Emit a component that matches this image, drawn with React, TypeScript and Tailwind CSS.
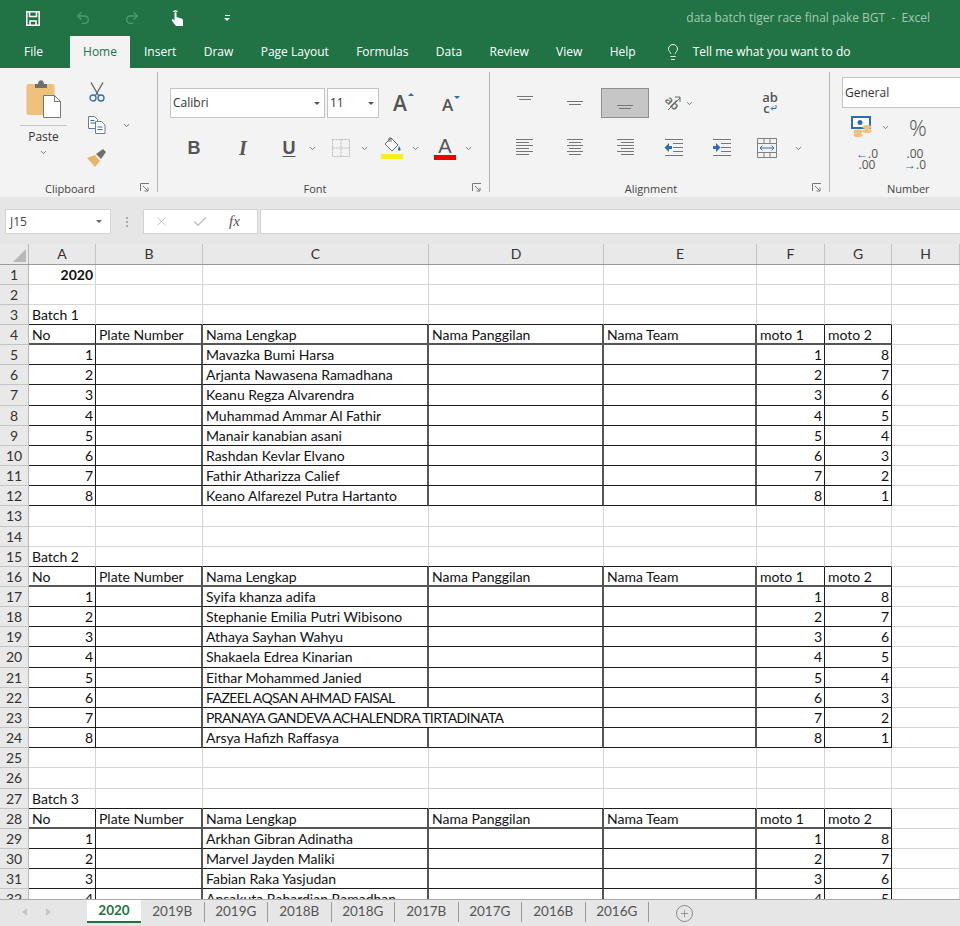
import { Undo2, Redo2, Lightbulb, ChevronDown, Check, X, Plus } from 'lucide-react';

type Row = { cells: string[]; boxed?: boolean; head?: boolean; wide?: boolean; caps?: boolean };

const COLUMNS = ['A', 'B', 'C', 'D', 'E', 'F', 'G', 'H'];
const COL_WIDTHS = ['w-[67px]', 'w-[107px]', 'w-[226px]', 'w-[175px]', 'w-[153px]', 'w-[68px]', 'w-[67px]', 'w-[68px]'];
// the printed borders of these columns came out heavier in the capture
const BOX_RIGHT = [
  'border-r border-r-[#1c1c1c]',
  'border-r-2 border-r-[#555]',
  'border-r-2 border-r-[#555]',
  'border-r-2 border-r-[#555]',
  'border-r-2 border-r-[#555]',
  'border-r border-r-[#1c1c1c]',
  'border-r border-r-[#1c1c1c]',
];

const HEAD = ['No', 'Plate Number', 'Nama Lengkap', 'Nama Panggilan', 'Nama Team', 'moto 1', 'moto 2'];

const BATCH_1 = [
  'Mavazka Bumi Harsa',
  'Arjanta Nawasena Ramadhana',
  'Keanu Regza Alvarendra',
  'Muhammad Ammar Al Fathir',
  'Manair kanabian asani',
  'Rashdan Kevlar Elvano',
  'Fathir Atharizza Calief',
  'Keano Alfarezel Putra Hartanto',
];
const BATCH_2 = [
  'Syifa khanza adifa',
  'Stephanie Emilia Putri Wibisono',
  'Athaya Sayhan Wahyu',
  'Shakaela Edrea Kinarian',
  'Eithar Mohammed Janied',
  'FAZEEL AQSAN AHMAD FAISAL',
  'PRANAYA GANDEVA ACHALENDRA TIRTADINATA',
  'Arsya Hafizh Raffasya',
];
const BATCH_3 = ['Arkhan Gibran Adinatha', 'Marvel Jayden Maliki', 'Fabian Raka Yasjudan', 'Ansakuta Rahardian Ramadhan'];

function batchRows(names: string[], title: string): Row[] {
  return [
    { cells: [title] },
    { cells: HEAD, boxed: true, head: true },
    ...names.map((name, i) => ({
      cells: [String(i + 1), '', name, '', '', String(i + 1), String(8 - i)],
      boxed: true,
      wide: name.startsWith('PRANAYA'),
      caps: name === name.toUpperCase(),
    })),
  ];
}

const ROWS: Row[] = [
  { cells: ['2020'] },
  { cells: [] },
  ...batchRows(BATCH_1, 'Batch 1'),
  { cells: [] },
  { cells: [] },
  ...batchRows(BATCH_2, 'Batch 2'),
  { cells: [] },
  { cells: [] },
  ...batchRows(BATCH_3, 'Batch 3'),
];

const TABS = ['2019B', '2019G', '2018B', '2018G', '2017B', '2017G', '2016B', '2016G'];

function Chev({ className = '' }: { className?: string }) {
  return <ChevronDown size={9} strokeWidth={2} className={`text-[#555] ${className}`} />;
}

function Launcher() {
  return (
    <svg width="10" height="10" viewBox="0 0 10 10" fill="none" stroke="#777">
      <path d="M.5 8V.5H9M3 3l5 5M8 4.5V8H4.5" />
    </svg>
  );
}

function Lines({ rows }: { rows: [number, number, number][] }) {
  return (
    <svg width="20" height="22" viewBox="0 0 20 22" stroke="#767676" strokeWidth="1">
      {rows.map(([y, a, b]) => (
        <path key={y} d={`M${a} ${y + 0.5}H${b}`} />
      ))}
    </svg>
  );
}

const VERT = (y: number): [number, number, number][] => [
  [y, 2, 18],
  [y + 3, 4, 16],
];
const LEFT: [number, number, number][] = [[2, 1, 18], [5, 1, 14], [8, 1, 18], [11, 1, 14], [14, 1, 18], [17, 1, 14]];
const CENTER: [number, number, number][] = [[2, 2, 18], [5, 4, 16], [8, 2, 18], [11, 4, 16], [14, 2, 18], [17, 4, 16]];
const RIGHT: [number, number, number][] = [[2, 2, 19], [5, 6, 19], [8, 2, 19], [11, 6, 19], [14, 2, 19], [17, 6, 19]];

function Indent({ flip }: { flip?: boolean }) {
  return (
    <svg width="20" height="20" viewBox="0 0 20 20">
      <g stroke="#767676">
        <path d="M1 1.5h18M9 5.5h10M9 9.5h10M9 13.5h10M1 17.5h18" />
      </g>
      {flip ? (
        <path d="M1 8h3V5l4.5 4.5L4 14v-3H1z" fill="#2f6db3" />
      ) : (
        <path d="M8 8H5V5L.5 9.5 5 14v-3h3z" fill="#2f6db3" />
      )}
    </svg>
  );
}

function PasteIcon() {
  return (
    <svg width="36" height="40" viewBox="0 0 36 40">
      <rect x="0.5" y="4" width="28" height="31" rx="2" fill="#eec27d" />
      <path d="M9 4h3c0-5 6-5 6 0h3v4H9z" fill="#6f6f6f" />
      <path d="M17.5 15.5h11l6 6v16h-17z" fill="#fff" stroke="#777" />
      <path d="M28.5 15.5v6h6" fill="none" stroke="#777" />
    </svg>
  );
}

function ScissorsIcon() {
  return (
    <svg width="18" height="20" viewBox="0 0 18 20" fill="none">
      <path d="M3 .5l7.500 13M15 .5L7.500 13.500" stroke="#666" strokeWidth="1.400" />
      <circle cx="5" cy="16" r="3" stroke="#2f6db3" strokeWidth="1.300" />
      <circle cx="13" cy="16" r="3" stroke="#2f6db3" strokeWidth="1.300" />
    </svg>
  );
}

function CopyIcon() {
  return (
    <svg width="20" height="20" viewBox="0 0 20 20" fill="#fff" stroke="#6f7c8a">
      <path d="M1.5 1.5h6l3 3v9h-9z" />
      <path d="M8.5 6.5h6l3.5 3.5v8.500h-9.500z" />
      <path d="M3.500 5.500h4M3.500 8h5M10.500 12h5M10.500 14.500h5" stroke="#2f6db3" />
    </svg>
  );
}

function BrushIcon() {
  return (
    <svg width="22" height="20" viewBox="0 0 22 20">
      <path d="M1 10l8-3 5 6-5 6z" fill="#e8b56d" />
      <path d="M10 6l7-5 3 3-5 7z" fill="#6f6f6f" />
    </svg>
  );
}

function BorderIcon() {
  return (
    <svg width="18" height="18" viewBox="0 0 18 18" fill="none" stroke="#b8b8b8" strokeDasharray="2 1">
      <path d="M.5.500h17v17H.500zM9 .500v17M.500 9h17" />
    </svg>
  );
}

function FillIcon() {
  return (
    <div className="flex flex-col items-center">
      <svg width="20" height="17" viewBox="0 0 20 17" fill="none" stroke="#666">
        <path d="M9 1l7 7-6 6-7-7z" fill="#fff" />
        <path d="M7 5V1.500c0-1 2-1 2 0V5" />
        <path d="M17 9c1 2 2 3 1.500 4s-2.500 1-2.500-.500c0-1 .500-2 1-3.500z" fill="#2f6db3" stroke="none" />
      </svg>
      <div className="h-[5px] w-[22px] bg-[#ffee1f]" />
    </div>
  );
}

function MoneyIcon() {
  return (
    <svg width="22" height="22" viewBox="0 0 22 22">
      <rect x="1" y="1" width="18" height="11" fill="#fff" stroke="#2f6db3" strokeWidth="2" />
      <circle cx="9" cy="6.500" r="2.500" fill="#2f6db3" />
      <ellipse cx="16" cy="11" rx="4.500" ry="2" fill="#eec27d" />
      <ellipse cx="16" cy="15" rx="4.500" ry="2" fill="#eec27d" />
      <ellipse cx="7" cy="19" rx="4.500" ry="2" fill="#eec27d" />
      <ellipse cx="7" cy="15.500" rx="4.500" ry="2" fill="#eec27d" />
    </svg>
  );
}

function MergeIcon() {
  return (
    <svg width="20" height="20" viewBox="0 0 20 20" fill="none" stroke="#808080">
      <path d="M.5.500h19v19H.500zM.500 5.500h19M.500 14.500h19M7 .500v5M13 .500v5M7 14.500v5M13 14.500v5" />
      <path d="M3 10h14M5.500 7.500L3 10l2.500 2.500M14.500 7.500L17 10l-2.500 2.500" stroke="#2f6db3" />
    </svg>
  );
}

function GroupLabel({ label, className }: { label: string; className: string }) {
  return (
    <div className={`mt-auto -mb-[5px] flex h-[18px] items-center text-[11px] leading-none text-[#444] ${className}`}>
      <span className="flex-1 text-center">{label}</span>
      <Launcher />
    </div>
  );
}

function Ribbon() {
  return (
    <div className="flex h-[129px] shrink-0 bg-[#f3f3f3] pt-[4px] pb-[5px] font-['Open_Sans',sans-serif] text-[#333]">
      {/* clipboard */}
      <div className="flex w-[158px] shrink-0 flex-col border-r border-r-[#b5b5b5]">
        <div className="flex">
          <div className="ml-[20px] flex w-[47px] flex-col items-center pt-[8px]">
            <PasteIcon />
            <div className="mt-[5px] h-px w-full bg-[#c6c6c6]" />
            <span className="mt-[2px] text-[12px] leading-[18px]">Paste</span>
            <Chev className="mt-[2px]" />
          </div>
          <div className="ml-[19px] flex w-[22px] flex-col items-center gap-[13px] pt-[10px]">
            <ScissorsIcon />
            <CopyIcon />
            <BrushIcon />
          </div>
          <Chev className="mt-[49px] ml-[14px]" />
        </div>
        <GroupLabel label="Clipboard" className="pr-[7px]" />
      </div>

      {/* font */}
      <div className="flex w-[332px] shrink-0 flex-col border-r border-r-[#b5b5b5]">
        <div className="mt-[16px] flex items-center pl-[12px]">
          <div className="flex h-[30px] w-[155px] items-center justify-between border border-[#c4c4c4] bg-white pr-[4px] pl-[2px] text-[12px]">
            Calibri
            <span className="mt-px border-x-[3px] border-t-[3px] border-x-transparent border-t-[#555]" />
          </div>
          <div className="ml-[2px] flex h-[30px] w-[52px] items-center justify-between border border-[#c4c4c4] bg-white pr-[4px] pl-[2px] text-[12px]">
            11
            <span className="mt-px border-x-[3px] border-t-[3px] border-x-transparent border-t-[#555]" />
          </div>
          <span className="ml-[14px] flex w-[20px] text-[21px] leading-none font-semibold text-[#555]">
            A<span className="ml-[1px] h-0 border-x-[3px] border-b-[3px] border-x-transparent border-b-[#2f6db3]" />
          </span>
          <span className="ml-[29px] flex w-[20px] pt-[2px] text-[17px] leading-none font-semibold text-[#555]">
            A<span className="ml-[1px] h-0 border-x-[3px] border-t-[3px] border-x-transparent border-t-[#2f6db3]" />
          </span>
        </div>
        <div className="mt-[15px] flex h-[30px] items-center pl-[12px]">
          <span className="w-[48px] text-center font-['Liberation_Sans',sans-serif] text-[18px] font-bold text-[#555]">B</span>
          <span className="w-[50px] text-center font-['Liberation_Serif',serif] text-[20px] font-bold text-[#555] italic">I</span>
          <span className="ml-[4px] w-[34px] text-center font-['Liberation_Sans',sans-serif] text-[18px] leading-[20px] font-bold text-[#555] underline underline-offset-2">U</span>
          <span className="flex w-[12px] justify-center"><Chev /></span>
          <span className="ml-[6px] flex w-[34px] justify-center"><BorderIcon /></span>
          <span className="flex w-[12px] justify-center"><Chev /></span>
          <span className="ml-[5px] flex w-[34px] justify-center"><FillIcon /></span>
          <span className="flex w-[12px] justify-center"><Chev /></span>
          <span className="ml-[7px] flex w-[34px] flex-col items-center">
            <span className="font-['Liberation_Sans',sans-serif] text-[20px] leading-[18px] text-[#555]">A</span>
            <span className="h-[5px] w-[22px] bg-[#ee0000]" />
          </span>
          <span className="flex w-[12px] justify-center"><Chev /></span>
        </div>
        <GroupLabel label="Font" className="pr-[7px]" />
      </div>

      {/* alignment */}
      <div className="flex w-[340px] shrink-0 flex-col border-r border-r-[#b5b5b5]">
        <div className="mt-[16px] flex h-[30px] items-center">
          <span className="ml-[10px] flex w-[50px] justify-center"><Lines rows={VERT(4)} /></span>
          <span className="flex w-[50px] justify-center"><Lines rows={VERT(9)} /></span>
          <span className="ml-[1px] flex h-[30px] w-[48px] justify-center border border-[#8f8f8f] bg-[#c6c6c6] pt-[4px]"><Lines rows={VERT(12)} /></span>
          <span className="relative ml-[12px] flex h-[20px] w-[22px] items-center justify-center overflow-visible">
            <span className="rotate-[45deg] text-[12px] leading-none font-semibold text-[#666]">ab</span>
            <svg className="absolute top-0 left-0" width="22" height="20" viewBox="0 0 22 20" fill="none" stroke="#666">
              <path d="M7 17L19 5M14 4h5v5" />
            </svg>
          </span>
          <Chev className="ml-[2px]" />
          <span className="ml-[65px] flex w-[22px] flex-col items-center text-[13px] leading-[11px] font-semibold text-[#555]">
            <span>ab</span>
            <span className="flex items-center">
              c
              <svg width="7" height="7" viewBox="0 0 7 7" fill="none" stroke="#2f6db3">
                <path d="M6 0v3.500H1.500M3 1.500l-2 2 2 2" />
              </svg>
            </span>
          </span>
        </div>
        <div className="mt-[15px] flex h-[30px] items-center">
          <span className="ml-[10px] flex w-[50px] justify-center"><Lines rows={LEFT} /></span>
          <span className="flex w-[50px] justify-center"><Lines rows={CENTER} /></span>
          <span className="flex w-[50px] justify-center"><Lines rows={RIGHT} /></span>
          <span className="flex w-[47px] justify-center"><Indent /></span>
          <span className="flex w-[50px] justify-center"><Indent flip /></span>
          <span className="flex w-[40px] justify-center"><MergeIcon /></span>
          <Chev className="ml-[7px]" />
        </div>
        <GroupLabel label="Alignment" className="pr-[7px]" />
      </div>

      {/* number */}
      <div className="flex min-w-0 flex-1 flex-col pl-[12px]">
        <div className="mt-[5px] flex h-[31px] items-center border border-r-0 border-[#c4c4c4] bg-white pl-[2px] text-[12px]">General</div>
        <div className="mt-[6px] flex h-[26px] items-center">
          <span className="ml-[9px]"><MoneyIcon /></span>
          <Chev className="ml-[8px]" />
          <span className="ml-[19px] text-[22px] leading-none font-light text-[#555]">%</span>
        </div>
        <div className="mt-[8px] flex items-center text-[12px] leading-[11px] text-[#555]">
          <span className="ml-[13px] flex w-[24px] flex-col items-center">
            <span><span className="font-bold text-[#2f6db3]">←</span>.0</span>
            <span>.00</span>
          </span>
          <span className="ml-[24px] flex w-[24px] flex-col items-center">
            <span>.00</span>
            <span><span className="font-bold text-[#2f6db3]">→</span>.0</span>
          </span>
        </div>
        <div className="mt-auto -mb-[5px] flex h-[18px] items-center pl-[45px] text-[11px] leading-none text-[#444]">Number</div>
      </div>
    </div>
  );
}

function Header() {
  return (
    <div className="h-[68px] shrink-0 bg-[#217346] font-['Open_Sans',sans-serif] text-white">
      <div className="flex h-[36px] items-center">
        <svg className="ml-[26px]" width="14" height="15" viewBox="0 0 14 15" fill="none" stroke="#fff" strokeWidth="1.500">
          <path d="M.800.800h12.400v13.400H.800z" />
          <path d="M3.500 1v4.500h7V1M4 14v-4h6v4" />
        </svg>
        <Undo2 size={16} strokeWidth={2} className="ml-[35px] text-[#4f9a72]" />
        <Redo2 size={16} strokeWidth={2} className="ml-[33px] text-[#4f9a72]" />
        <svg className="ml-[30px]" width="14" height="17" viewBox="0 0 14 17" fill="#fff">
          <path d="M3 1.500a3 3 0 0 1 5 0l-1 .800a2 2 0 0 0-3 0zM4.500 3c0-1 2-1 2 0v4l5 1.500c1 .500 1.500 1 1.500 2V16H6l-4-5c-.500-1 .500-2 1.500-1.500l1 1z" />
        </svg>
        <Chev className="ml-[7px] text-[#9fc5ae]" />
        <div className="ml-[24px] flex flex-col items-center gap-[2px]">
          <span className="h-px w-[5px] bg-white" />
          <span className="border-x-[3px] border-t-[3px] border-x-transparent border-t-white" />
        </div>
        <span className="mr-[30px] ml-auto text-[12px] whitespace-pre text-[#a3c9b3]">data batch tiger race final pake BGT  -  Excel</span>
      </div>
      <div className="flex h-[32px] items-center text-[12px]">
        <span className="ml-[24px] w-[46px]">File</span>
        <span className="flex h-full w-[60px] items-center justify-center bg-[#f3f3f3] text-[#217346]">Home</span>
        <span className="ml-[14px] flex items-center gap-[27.400px]">
          <span>Insert</span>
          <span>Draw</span>
          <span>Page Layout</span>
          <span>Formulas</span>
          <span>Data</span>
          <span>Review</span>
          <span>View</span>
          <span>Help</span>
        </span>
        <Lightbulb size={18} strokeWidth={1.200} className="ml-[28px]" />
        <span className="ml-[11px]">Tell me what you want to do</span>
      </div>
    </div>
  );
}

function FormulaBar() {
  return (
    <div className="flex h-[47px] shrink-0 items-center bg-[#e6e6e6] pt-[2px] font-['Open_Sans',sans-serif] text-[12px] text-[#444]">
      <div className="ml-[5px] flex h-[25px] w-[106px] items-center justify-between border border-[#d4d4d4] bg-white pr-[8px] pl-[4px]">
        J15
        <span className="border-x-[3px] border-t-[3px] border-x-transparent border-t-[#666]" />
      </div>
      <div className="ml-[15px] flex flex-col gap-[2px]">
        <span className="size-[2px] bg-[#aaa]" />
        <span className="size-[2px] bg-[#aaa]" />
        <span className="size-[2px] bg-[#aaa]" />
      </div>
      <div className="ml-[15px] flex h-[25px] w-[115px] items-center border border-[#d4d4d4] bg-white">
        <X size={15} strokeWidth={1.300} className="ml-[10px] text-[#b5b5b5]" />
        <Check size={16} strokeWidth={2} className="ml-[23px] text-[#bdbdbd]" />
        <span className="ml-[21px] font-['Liberation_Serif',serif] text-[15px] text-[#555] italic">fx</span>
      </div>
      <div className="ml-[2px] h-[25px] flex-1 border border-r-0 border-[#d4d4d4] bg-white" />
    </div>
  );
}

function ColumnHeaders() {
  return (
    <div className="flex h-[20.500px] shrink-0 border-b border-b-[#9a9a9a] bg-[#e9e9e9] text-[#333]">
      <div className="flex w-[29px] shrink-0 items-end justify-end border-r border-r-[#b8b8b8] p-[2px]">
        <span className="border-b-[13px] border-l-[13px] border-b-[#b8b8b8] border-l-transparent" />
      </div>
      {COLUMNS.map((col, i) => (
        <div key={col} className={`${COL_WIDTHS[i]} shrink-0 border-r border-r-[#c4c4c4] text-center text-[14px] leading-[20px]`}>
          {col}
        </div>
      ))}
    </div>
  );
}

function SheetRow({ row, index }: { row: Row; index: number }) {
  const nextIsHead = ROWS[index + 1]?.head;
  return (
    <div className="flex h-[20.17px] shrink-0">
      <div className="w-[29px] shrink-0 border-r border-b border-r-[#b8b8b8] border-b-[#c4c4c4] bg-[#e9e9e9] text-center text-[14px] leading-[19px] text-[#333]">
        {index + 1}
      </div>
      {COLUMNS.map((col, i) => {
        const text = row.cells[i] ?? '';
        const numeric = text !== '' && /^\d+$/.test(text);
        const boxedCell = row.boxed && i < 7;
        // row 23's name runs over into the empty column D
        const joined = row.wide && i === 2;
        let right = boxedCell ? BOX_RIGHT[i] : 'border-r border-r-[#d4d4d4]';
        let bottom = 'border-b border-b-[#d4d4d4]';
        if (boxedCell) bottom = row.head ? 'border-b-2 border-b-[#555]' : 'border-b border-b-[#1c1c1c]';
        if (nextIsHead && i < 7) bottom = 'border-b border-b-[#1c1c1c]';
        if (joined) right = 'border-r-0';
        return (
          <div
            key={col}
            className={`${COL_WIDTHS[i]} relative shrink-0 ${right} ${bottom} ${numeric ? 'pr-[2px] text-right' : 'pl-[3px]'} ${
              joined ? 'z-10' : ''
            } ${row.caps && i === 2 ? 'tracking-[-0.6px]' : ''} text-[14px] leading-[19px] whitespace-nowrap ${text === '2020' ? 'font-bold' : ''} text-[#111]`}
          >
            {text}
          </div>
        );
      })}
    </div>
  );
}

function SheetTabs() {
  return (
    <div className="flex h-[27px] shrink-0 border-t border-t-[#a8a8a8] bg-[#e6e6e6] font-['Lato',sans-serif] text-[13.500px] text-[#555]">
      <div className="flex w-[87px] items-center gap-[19px] pb-[3px] pl-[22px]">
        <span className="border-y-[4px] border-r-[5px] border-y-transparent border-r-[#c6c6c6]" />
        <span className="border-y-[4px] border-l-[5px] border-y-transparent border-l-[#c6c6c6]" />
      </div>
      <div className="flex h-[23px] w-[54px] items-center justify-center border-b-2 border-b-[#217346] bg-white font-bold text-[#217346]">2020</div>
      <div className="flex">
        {TABS.map((tab) => (
          <div key={tab} className="my-[2px] flex h-[20px] w-[63.500px] items-center justify-center border-r border-r-[#9a9a9a] leading-none">
            {tab}
          </div>
        ))}
      </div>
      <div className="ml-[27px] flex h-[26px] items-center">
        <span className="flex size-[17px] items-center justify-center rounded-full border border-[#888]">
          <Plus size={11} strokeWidth={1.500} className="text-[#777]" />
        </span>
      </div>
    </div>
  );
}

export default function App() {
  return (
    <div className="flex h-[926px] w-[960px] flex-col overflow-hidden bg-white font-['Lato',sans-serif]">
      <Header />
      <Ribbon />
      <FormulaBar />
      <ColumnHeaders />
      <div className="flex min-h-0 flex-1 flex-col overflow-hidden">
        {ROWS.map((row, i) => (
          <SheetRow key={i} row={row} index={i} />
        ))}
      </div>
      <SheetTabs />
    </div>
  );
}
